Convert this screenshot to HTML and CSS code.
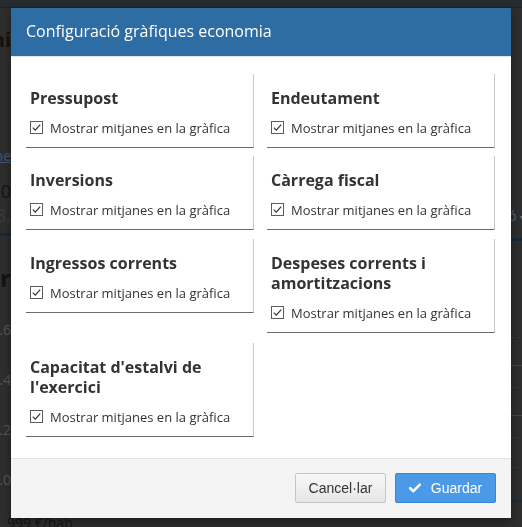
FILE: index.html
```html
<!DOCTYPE html>
<html lang="ca">
<head>
<meta charset="utf-8">
<title>Configuració gràfiques economia</title>
<link rel="stylesheet" href="styles.css">
</head>
<body>
<div class="page">
  <div class="topbar"></div>
  <div class="page-cols">
    <div class="gutter gutter-left">
      <div class="frag f-title">ni</div>
      <div class="frag f-link">ne</div>
      <div class="frag f-num">0</div>
      <div class="frag f-num2">8,</div>
      <div class="rule rule-blue"></div>
      <div class="frag f-head">Pr</div>
      <div class="frag f-axis f-axis-first">.6</div>
      <div class="frag f-axis">.4</div>
      <div class="frag f-axis">.2</div>
      <div class="frag f-axis">.0</div>
      <div class="f-foot">999 €/hab</div>
    </div>
    <div class="gutter gutter-right">
      <div class="f-select">ó <span class="caret">▾</span></div>
      <div class="rule rule-blue rule-blue-r"></div>
      <div class="rule dash d1"></div>
      <div class="rule green"></div>
      <div class="rule dash d2"></div>
      <div class="rule orange"></div>
      <div class="rule dash d3"></div>
      <div class="rule dash d4"></div>
      <div class="rule rule-blue2"></div>
    </div>
  </div>
</div>

<div class="overlay">
  <div class="modal">
    <div class="modal-header">
      <h4 class="modal-title">Configuració gràfiques economia</h4>
    </div>
    <div class="modal-body">
      <div class="card-grid">
        <div class="card">
          <h5 class="card-title">Pressupost</h5>
          <label class="check"><span class="box"><svg viewBox="0 0 13 13" width="13" height="13"><rect x="0.5" y="0.5" width="12" height="12" fill="#fff" stroke="#5c5c5c"/><path d="M2.8 6.6 L5.3 9.1 L10.2 3.6" fill="none" stroke="#333" stroke-width="1.2"/></svg></span>Mostrar mitjanes en la gràfica</label>
        </div>
        <div class="card">
          <h5 class="card-title">Endeutament</h5>
          <label class="check"><span class="box"><svg viewBox="0 0 13 13" width="13" height="13"><rect x="0.5" y="0.5" width="12" height="12" fill="#fff" stroke="#5c5c5c"/><path d="M2.8 6.6 L5.3 9.1 L10.2 3.6" fill="none" stroke="#333" stroke-width="1.2"/></svg></span>Mostrar mitjanes en la gràfica</label>
        </div>
        <div class="card">
          <h5 class="card-title">Inversions</h5>
          <label class="check"><span class="box"><svg viewBox="0 0 13 13" width="13" height="13"><rect x="0.5" y="0.5" width="12" height="12" fill="#fff" stroke="#5c5c5c"/><path d="M2.8 6.6 L5.3 9.1 L10.2 3.6" fill="none" stroke="#333" stroke-width="1.2"/></svg></span>Mostrar mitjanes en la gràfica</label>
        </div>
        <div class="card">
          <h5 class="card-title">Càrrega fiscal</h5>
          <label class="check"><span class="box"><svg viewBox="0 0 13 13" width="13" height="13"><rect x="0.5" y="0.5" width="12" height="12" fill="#fff" stroke="#5c5c5c"/><path d="M2.8 6.6 L5.3 9.1 L10.2 3.6" fill="none" stroke="#333" stroke-width="1.2"/></svg></span>Mostrar mitjanes en la gràfica</label>
        </div>
        <div class="card row-3">
          <h5 class="card-title">Ingressos corrents</h5>
          <label class="check"><span class="box"><svg viewBox="0 0 13 13" width="13" height="13"><rect x="0.5" y="0.5" width="12" height="12" fill="#fff" stroke="#5c5c5c"/><path d="M2.8 6.6 L5.3 9.1 L10.2 3.6" fill="none" stroke="#333" stroke-width="1.2"/></svg></span>Mostrar mitjanes en la gràfica</label>
        </div>
        <div class="card row-3">
          <h5 class="card-title">Despeses corrents i amortitzacions</h5>
          <label class="check"><span class="box"><svg viewBox="0 0 13 13" width="13" height="13"><rect x="0.5" y="0.5" width="12" height="12" fill="#fff" stroke="#5c5c5c"/><path d="M2.8 6.6 L5.3 9.1 L10.2 3.6" fill="none" stroke="#333" stroke-width="1.2"/></svg></span>Mostrar mitjanes en la gràfica</label>
        </div>
        <div class="card row-4">
          <h5 class="card-title">Capacitat d'estalvi de l'exercici</h5>
          <label class="check"><span class="box"><svg viewBox="0 0 13 13" width="13" height="13"><rect x="0.5" y="0.5" width="12" height="12" fill="#fff" stroke="#5c5c5c"/><path d="M2.8 6.6 L5.3 9.1 L10.2 3.6" fill="none" stroke="#333" stroke-width="1.2"/></svg></span>Mostrar mitjanes en la gràfica</label>
        </div>
      </div>
    </div>
    <div class="modal-footer">
      <button class="btn btn-default" type="button">Cancel·lar</button>
      <button class="btn btn-primary" type="button"><svg class="btn-icon" viewBox="0 0 12 10" width="12" height="10"><path d="M1.2 5.2 L4.4 8.2 L10.8 1.6" fill="none" stroke="#fff" stroke-width="2.6" stroke-linecap="round" stroke-linejoin="round"/></svg>Guardar</button>
    </div>
  </div>
</div>
</body>
</html>
```
FILE: styles.css
```css
* { box-sizing: border-box; }

html, body {
  margin: 0;
  padding: 0;
  height: 100%;
}

body {
  background: #2e2e2e;
  font-family: "Open Sans", "Liberation Sans", sans-serif;
  overflow: hidden;
}

/* ---------- dimmed page behind the dialog ---------- */
.page {
  height: 100%;
}

.topbar {
  height: 8px;
  background: #262b2d;
  border-bottom: 1px solid #1f2224;
}

.page-cols {
  display: flex;
  justify-content: space-between;
}

.gutter {
  width: 11px;
  display: flex;
  flex-direction: column;
}

.frag {
  display: flex;
  justify-content: flex-end;
  white-space: nowrap;
}

.f-title {
  margin-top: 20px;
  font-size: 20px;
  line-height: 24px;
  font-weight: 700;
  color: #121212;
}

.f-link {
  margin-top: 94px;
  font-size: 14px;
  line-height: 20px;
  color: #3f5a72;
  text-decoration: underline;
}

.f-num {
  margin-top: 13px;
  font-size: 18px;
  line-height: 24px;
  color: #141414;
}

.f-num2 {
  margin-top: 0;
  font-size: 18px;
  line-height: 24px;
  color: #3c3c3c;
}

.rule {
  flex: none;
  width: 100%;
}

.rule-blue {
  margin-top: 6px;
  height: 3px;
  background: #17283a;
}

.f-head {
  margin-top: 28px;
  font-size: 24px;
  line-height: 28px;
  font-weight: 700;
  color: #131313;
}

.f-axis {
  margin-top: 30px;
  font-size: 14px;
  line-height: 20px;
  color: #585858;
}

.f-axis-first {
  margin-top: 28px;
}

.f-foot {
  margin-top: 23px;
  margin-left: 7px;
  white-space: nowrap;
  font-size: 14px;
  line-height: 20px;
  color: #151515;
}

.f-select {
  margin-top: 198px;
  margin-left: -3px;
  white-space: nowrap;
  font-size: 14px;
  line-height: 20px;
  color: #666;
}

.caret {
  font-size: 10px;
  color: #777;
}

.rule-blue-r {
  margin-top: 11px;
}

.dash {
  height: 1px;
  background: repeating-linear-gradient(90deg, #3a3a3a 0 3px, transparent 3px 6px);
}

.d1 { margin-top: 96px; }
.green { margin-top: 27px; height: 1px; background: #3d4b2f; }
.d2 { margin-top: 21px; }
.orange { margin-top: 27px; height: 1px; background: #5a402b; }
.d3 { margin-top: 21px; }
.d4 { margin-top: 29px; }
.rule-blue2 { margin-top: 32px; height: 2px; background: #1a2c3e; }

/* ---------- dialog ---------- */
.overlay {
  position: fixed;
  inset: 0;
  display: flex;
  justify-content: center;
  align-items: flex-start;
  padding-top: 8px;
}

.modal {
  width: 500px;
  background: #fff;
  box-shadow: 0 3px 9px rgba(0, 0, 0, 0.4);
}

.modal-header {
  background: #2e6da4;
  padding: 13px 15px 15px;
  border-bottom: 1px solid #e5e5e5;
  height: 49px;
}

.modal-title {
  margin: 0;
  font-size: 16px;
  line-height: 20px;
  font-weight: 400;
  color: #fff;
}

.modal-body {
  padding: 17px 15px 21px;
}

.card-grid {
  display: grid;
  grid-template-columns: 228px 228px;
  column-gap: 13px;
  row-gap: 8px;
  align-items: start;
}

.card {
  padding: 14px 4px 9px;
  border-right: 1px solid #c9c9c9;
  border-bottom: 1px solid #6b6b6b;
}

.row-3 { margin-top: 1px; }
.row-4 { margin-top: 2px; }

.card-title {
  margin: 0;
  font-size: 16px;
  line-height: 20px;
  font-weight: 700;
  color: #333;
}

.check {
  margin-top: 10px;
  display: flex;
  align-items: center;
  gap: 7px;
  font-size: 13px;
  line-height: 20px;
  color: #333;
}

.box {
  display: flex;
  flex: none;
  margin-top: -1px;
}

.modal-footer {
  display: flex;
  justify-content: flex-end;
  gap: 9px;
  padding: 14px 15px 15px;
  background: #f4f4f4;
  border-top: 1px solid #e2e2e2;
}

.btn {
  display: inline-flex;
  align-items: center;
  justify-content: center;
  height: 30px;
  padding: 0 12px;
  font-family: "Liberation Sans", Arial, sans-serif;
  font-size: 14px;
  border-radius: 2px;
  cursor: pointer;
}

.btn-default {
  width: 91px;
  color: #333;
  background: linear-gradient(#f8f8f8, #e6e6e6);
  border: 1px solid #c6c6c6;
}

.btn-primary {
  width: 101px;
  color: #fff;
  background: #4a9ae8;
  border: 1px solid #3a85d3;
  gap: 10px;
}

.btn-icon {
  flex: none;
}
```
